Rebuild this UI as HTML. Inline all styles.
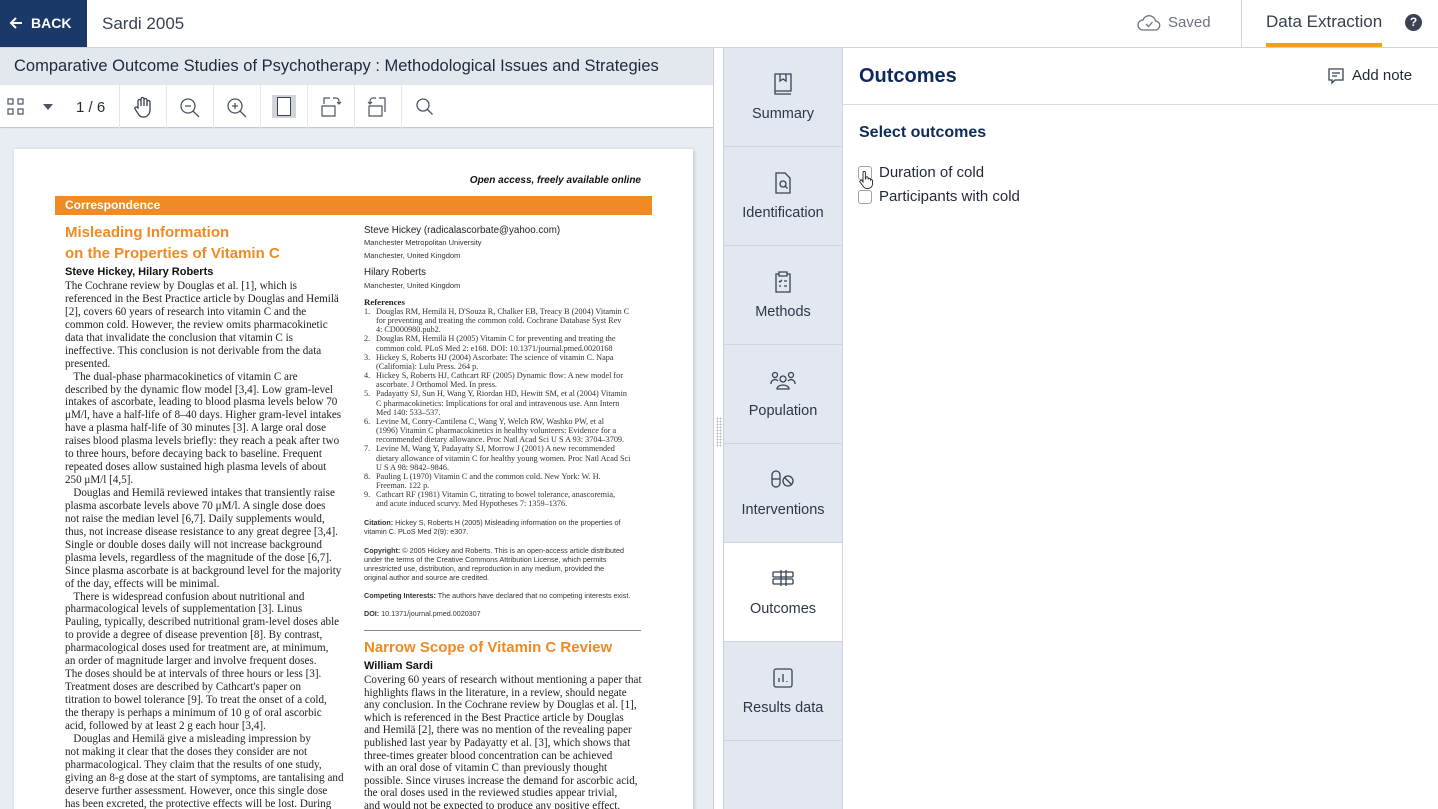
<!DOCTYPE html>
<html style="width:1438px;height:809px;overflow:hidden"><head><meta charset="utf-8">
<style>
*{margin:0;padding:0;box-sizing:border-box}
body{width:1438px;height:809px;overflow:hidden;position:relative;font-family:"Liberation Sans",sans-serif;background:#fff;color:#1f2937}
.a{position:absolute;white-space:nowrap}
.nav{position:absolute;left:724px;width:118px;height:99px;background:#e3e8f0;border-bottom:1px solid #cdd5e0;text-align:center;color:#2d3748;font-size:14.5px}
.nav svg{position:absolute;left:48px;top:24px}
.nav span{position:absolute;left:0;right:0;top:58px}
.l{position:absolute;left:65px;font-family:"Liberation Serif",serif;font-size:11.1px;color:#222;white-space:nowrap;line-height:12.93px}
.r{position:absolute;left:364px;font-family:"Liberation Serif",serif;font-size:11.1px;color:#222;white-space:nowrap;line-height:13px}
.ref{position:absolute;font-family:"Liberation Serif",serif;font-size:8.2px;color:#333;white-space:nowrap;line-height:9.15px}
.sm{position:absolute;left:364px;font-size:7.2px;color:#333;white-space:nowrap;line-height:9px}
.tb{position:absolute;top:85px;height:43px;border-right:1px solid #e5e7eb}
</style></head><body>
<!-- header -->
<div class="a" style="left:0;top:0;width:1438px;height:48px;border-bottom:1px solid #d1d5db;background:#fff"></div>
<div class="a" style="left:0;top:0;width:87px;height:47px;background:#1b3968"></div>
<svg class="a" style="left:9px;top:16px" width="14" height="14" viewBox="0 0 14 14"><path d="M13 7H2M7 2L2 7l5 5" stroke="#fff" stroke-width="2" fill="none"/></svg>
<div class="a" style="left:31px;top:15px;color:#fff;font-weight:bold;font-size:14px">BACK</div>
<div class="a" style="left:102px;top:14px;font-size:17px;color:#374151">Sardi 2005</div>
<svg class="a" style="left:1137px;top:14px" width="24" height="18" viewBox="0 0 24 18"><path d="M6 16h12a4.5 4.5 0 0 0 .5-9A6.5 6.5 0 0 0 6 6a5 5 0 0 0 0 10z" stroke="#6b7280" stroke-width="1.3" fill="none"/><path d="M9 10l2.5 2.5L15.5 8" stroke="#6b7280" stroke-width="1.3" fill="none"/></svg>
<div class="a" style="left:1168px;top:14px;font-size:15px;color:#6b7280">Saved</div>
<div class="a" style="left:1241px;top:0;width:1px;height:47px;background:#d1d5db"></div>
<div class="a" style="left:1266px;top:12px;font-size:17px;color:#374151">Data Extraction</div>
<div class="a" style="left:1266px;top:43px;width:116px;height:4px;background:#f0a01a"></div>
<div class="a" style="left:1405px;top:14px;width:17px;height:17px;border-radius:50%;background:#3b4252;color:#fff;font-size:12px;font-weight:bold;text-align:center;line-height:17px">?</div>

<!-- left pane -->
<div class="a" style="left:0;top:48px;width:713px;height:37px;background:#e3e8ef"></div>
<div class="a" style="left:14px;top:57px;font-size:16.5px;color:#1f2937">Comparative Outcome Studies of Psychotherapy : Methodological Issues and Strategies</div>
<div class="a" style="left:0;top:85px;width:713px;height:43px;background:#fff;border-bottom:1px solid #c4c9d1;box-shadow:0 1px 2px rgba(0,0,0,.15)"></div>
<div class="tb" style="left:0;width:120px"></div>
<div class="tb" style="left:120px;width:47px"></div>
<div class="tb" style="left:167px;width:47px"></div>
<div class="tb" style="left:214px;width:47px"></div>
<div class="tb" style="left:261px;width:47px"></div>
<div class="tb" style="left:308px;width:47px"></div>
<div class="tb" style="left:355px;width:47px"></div>
<svg class="a" style="left:7px;top:98px" width="18" height="18" viewBox="0 0 18 18" fill="none" stroke="#4b5563" stroke-width="1.2"><rect x="1" y="1" width="5" height="5"/><rect x="11" y="1" width="5" height="5"/><rect x="1" y="11" width="5" height="5"/><rect x="11" y="11" width="5" height="5"/></svg>
<svg class="a" style="left:43px;top:104px" width="10" height="6"><path d="M0 0h10L5 6z" fill="#4b5563"/></svg>
<div class="a" style="left:76px;top:99px;font-size:15px;color:#1f2937">1 / 6</div>
<svg class="a" style="left:131px;top:95px" width="24" height="24" viewBox="0 0 24 24" fill="none" stroke="#374151" stroke-width="1.3"><path d="M7 13V6a1.5 1.5 0 0 1 3 0v5V4a1.5 1.5 0 0 1 3 0v7V5a1.5 1.5 0 0 1 3 0v6V7a1.5 1.5 0 0 1 3 0v8c0 4-3 7-6 7h-1c-3 0-4-2-6-5l-2-3a1.4 1.4 0 0 1 2.4-1.4z"/></svg>
<svg class="a" style="left:178px;top:96px" width="24" height="24" viewBox="0 0 24 24" fill="none" stroke="#4b5563" stroke-width="1.3"><circle cx="10" cy="10" r="7"/><path d="M15 15l6 6M7 10h6"/></svg>
<svg class="a" style="left:225px;top:96px" width="24" height="24" viewBox="0 0 24 24" fill="none" stroke="#4b5563" stroke-width="1.3"><circle cx="10" cy="10" r="7"/><path d="M15 15l6 6M7 10h6M10 7v6"/></svg>
<div class="a" style="left:272px;top:95px;width:24px;height:23px;background:#d1d5db"></div>
<div class="a" style="left:277px;top:97px;width:14px;height:19px;border:1.5px solid #374151;background:#fff"></div>
<svg class="a" style="left:319px;top:95px" width="24" height="24" viewBox="0 0 24 24" fill="none" stroke="#4b5563" stroke-width="1.2"><path d="M3 11h13v10H3z"/><path d="M5 9V3h6M14 3h3a3 3 0 0 1 3 3v3M18 7l2 2 2-2"/></svg>
<svg class="a" style="left:366px;top:95px" width="24" height="24" viewBox="0 0 24 24" fill="none" stroke="#4b5563" stroke-width="1.2"><path d="M3 11h13v10H3z"/><path d="M13 3h6v14M10 3H7a3 3 0 0 0-3 3v3M2 7l2 2 2-2"/></svg>
<svg class="a" style="left:415px;top:97px" width="20" height="20" viewBox="0 0 20 20" fill="none" stroke="#4b5563" stroke-width="1.3"><circle cx="8" cy="8" r="6"/><path d="M12.5 12.5l5 5"/></svg>

<div class="a" style="left:0;top:129px;width:713px;height:680px;background:#e8edf4;overflow:hidden">
<div class="a" style="left:14px;top:20px;width:679px;height:700px;background:#fff;box-shadow:1px 1px 4px rgba(0,0,0,.2)"></div>
</div>
<!-- splitter -->
<div class="a" style="left:713px;top:48px;width:11px;height:761px;background:#fff;border-left:1px solid #c9d0da;border-right:1px solid #c9d0da"></div>
<div class="a" style="left:716px;top:417px;width:6px;height:30px;background-image:radial-gradient(#bbb 0.8px,transparent 1px);background-size:3px 3px"></div>

<!-- paper -->
<div class="a" style="left:300px;top:175px;width:341px;text-align:right;font-size:10px;font-weight:bold;font-style:italic;color:#111">Open access, freely available online</div>
<div class="a" style="left:55px;top:196px;width:597px;height:19px;background:#f08a24"></div>
<div class="a" style="left:65px;top:198px;color:#fff;font-weight:bold;font-size:12px">Correspondence</div>
<div class="a" style="left:65px;top:224px;color:#f08a24;font-weight:bold;font-size:15px">Misleading Information</div>
<div class="a" style="left:65px;top:245px;color:#f08a24;font-weight:bold;font-size:15px">on the Properties of Vitamin C</div>
<div class="a" style="left:65px;top:266px;color:#111;font-weight:bold;font-size:11px">Steve Hickey, Hilary Roberts</div>
<div class="l" style="top:280px">The Cochrane review by Douglas et al. [1], which is<br>referenced in the Best Practice article by Douglas and Hemilä<br>[2], covers 60 years of research into vitamin C and the<br>common cold. However, the review omits pharmacokinetic<br>data that invalidate the conclusion that vitamin C is<br>ineffective. This conclusion is not derivable from the data<br>presented.<br>&nbsp;&nbsp;&nbsp;The dual-phase pharmacokinetics of vitamin C are<br>described by the dynamic flow model [3,4]. Low gram-level<br>intakes of ascorbate, leading to blood plasma levels below 70<br>μM/l, have a half-life of 8–40 days. Higher gram-level intakes<br>have a plasma half-life of 30 minutes [3]. A large oral dose<br>raises blood plasma levels briefly: they reach a peak after two<br>to three hours, before decaying back to baseline. Frequent<br>repeated doses allow sustained high plasma levels of about<br>250 μM/l [4,5].<br>&nbsp;&nbsp;&nbsp;Douglas and Hemilä reviewed intakes that transiently raise<br>plasma ascorbate levels above 70 μM/l. A single dose does<br>not raise the median level [6,7]. Daily supplements would,<br>thus, not increase disease resistance to any great degree [3,4].<br>Single or double doses daily will not increase background<br>plasma levels, regardless of the magnitude of the dose [6,7].<br>Since plasma ascorbate is at background level for the majority<br>of the day, effects will be minimal.<br>&nbsp;&nbsp;&nbsp;There is widespread confusion about nutritional and<br>pharmacological levels of supplementation [3]. Linus<br>Pauling, typically, described nutritional gram-level doses able<br>to provide a degree of disease prevention [8]. By contrast,<br>pharmacological doses used for treatment are, at minimum,<br>an order of magnitude larger and involve frequent doses.<br>The doses should be at intervals of three hours or less [3].<br>Treatment doses are described by Cathcart's paper on<br>titration to bowel tolerance [9]. To treat the onset of a cold,<br>the therapy is perhaps a minimum of 10 g of oral ascorbic<br>acid, followed by at least 2 g each hour [3,4].<br>&nbsp;&nbsp;&nbsp;Douglas and Hemilä give a misleading impression by<br>not making it clear that the doses they consider are not<br>pharmacological. They claim that the results of one study,<br>giving an 8-g dose at the start of symptoms, are tantalising and<br>deserve further assessment. However, once this single dose<br>has been excreted, the protective effects will be lost. During</div>

<div class="a" style="left:364px;top:225px;font-size:9.8px;color:#222">Steve Hickey (radicalascorbate@yahoo.com)</div>
<div class="a" style="left:364px;top:238px;font-size:7.5px;color:#333">Manchester Metropolitan University</div>
<div class="a" style="left:364px;top:251px;font-size:7.5px;color:#333">Manchester, United Kingdom</div>
<div class="a" style="left:364px;top:267px;font-size:9.8px;color:#222">Hilary Roberts</div>
<div class="a" style="left:364px;top:281px;font-size:7.5px;color:#333">Manchester, United Kingdom</div>
<div class="a" style="left:364px;top:297px;font-size:8.8px;font-weight:bold;font-family:'Liberation Serif',serif;color:#222">References</div>
<div class="ref" style="left:364px;top:307px">1.<br><br><br>2.<br><br>3.<br><br>4.<br><br>5.<br><br><br>6.<br><br><br>7.<br><br><br>8.<br><br>9.</div>
<div class="ref" style="left:376px;top:307px">Douglas RM, Hemilä H, D'Souza R, Chalker EB, Treacy B (2004) Vitamin C<br>for preventing and treating the common cold. Cochrane Database Syst Rev<br>4: CD000980.pub2.<br>Douglas RM, Hemilä H (2005) Vitamin C for preventing and treating the<br>common cold. PLoS Med 2: e168. DOI: 10.1371/journal.pmed.0020168<br>Hickey S, Roberts HJ (2004) Ascorbate: The science of vitamin C. Napa<br>(California): Lulu Press. 264 p.<br>Hickey S, Roberts HJ, Cathcart RF (2005) Dynamic flow: A new model for<br>ascorbate. J Orthomol Med. In press.<br>Padayatty SJ, Sun H, Wang Y, Riordan HD, Hewitt SM, et al (2004) Vitamin<br>C pharmacokinetics: Implications for oral and intravenous use. Ann Intern<br>Med 140: 533–537.<br>Levine M, Conry-Cantilena C, Wang Y, Welch RW, Washko PW, et al<br>(1996) Vitamin C pharmacokinetics in healthy volunteers: Evidence for a<br>recommended dietary allowance. Proc Natl Acad Sci U S A 93: 3704–3709.<br>Levine M, Wang Y, Padayatty SJ, Morrow J (2001) A new recommended<br>dietary allowance of vitamin C for healthy young women. Proc Natl Acad Sci<br>U S A 98: 9842–9846.<br>Pauling L (1970) Vitamin C and the common cold. New York: W. H.<br>Freeman. 122 p.<br>Cathcart RF (1981) Vitamin C, titrating to bowel tolerance, anascoremia,<br>and acute induced scurvy. Med Hypotheses 7: 1359–1376.</div>
<div class="sm" style="top:518px"><b>Citation:</b> Hickey S, Roberts H (2005) Misleading information on the properties of<br>vitamin C. PLoS Med 2(9): e307.</div>
<div class="sm" style="top:546px"><b>Copyright:</b> © 2005 Hickey and Roberts. This is an open-access article distributed<br>under the terms of the Creative Commons Attribution License, which permits<br>unrestricted use, distribution, and reproduction in any medium, provided the<br>original author and source are credited.</div>
<div class="sm" style="top:591px"><b>Competing Interests:</b> The authors have declared that no competing interests exist.</div>
<div class="sm" style="top:609px"><b>DOI:</b> 10.1371/journal.pmed.0020307</div>
<div class="a" style="left:364px;top:630px;width:277px;height:1px;background:#888"></div>
<div class="a" style="left:364px;top:639px;color:#f08a24;font-weight:bold;font-size:15px">Narrow Scope of Vitamin C Review</div>
<div class="a" style="left:364px;top:660px;color:#111;font-weight:bold;font-size:11px">William Sardi</div>
<div class="r" style="top:674px;line-height:12.6px">Covering 60 years of research without mentioning a paper that<br>highlights flaws in the literature, in a review, should negate<br>any conclusion. In the Cochrane review by Douglas et al. [1],<br>which is referenced in the Best Practice article by Douglas<br>and Hemilä [2], there was no mention of the revealing paper<br>published last year by Padayatty et al. [3], which shows that<br>three-times greater blood concentration can be achieved<br>with an oral dose of vitamin C than previously thought<br>possible. Since viruses increase the demand for ascorbic acid,<br>the oral doses used in the reviewed studies appear trivial,<br>and would not be expected to produce any positive effect.</div>

<!-- nav -->
<div class="a" style="left:724px;top:48px;width:119px;height:761px;background:#e3e8f0;border-right:1px solid #cdd5e0"></div>
<div class="nav" style="top:48px"><svg width="22" height="24" viewBox="0 0 22 24" fill="none" stroke="#374151" stroke-width="1.3"><path d="M3 2h16v17H3zM3 19v3h16M8 2v7l3-2 3 2V2"/></svg><span>Summary</span></div>
<div class="nav" style="top:147px"><svg width="22" height="24" viewBox="0 0 22 24" fill="none" stroke="#374151" stroke-width="1.3"><path d="M4 2h9l5 5v15H4z"/><circle cx="11" cy="13" r="3"/><path d="M13 15l2.5 2.5"/></svg><span>Identification</span></div>
<div class="nav" style="top:246px"><svg width="22" height="24" viewBox="0 0 22 24" fill="none" stroke="#374151" stroke-width="1.3"><path d="M7 4H4v18h14V4h-3M7 2h8v4H7zM7 11l1 1 2-2M12 11h3M7 16h2M12 16h3"/></svg><span>Methods</span></div>
<div class="nav" style="top:345px"><svg width="26" height="24" viewBox="0 0 26 24" fill="none" stroke="#374151" stroke-width="1.3" style="left:46px"><circle cx="5" cy="6" r="2.5"/><circle cx="21" cy="6" r="2.5"/><circle cx="13" cy="10" r="3"/><path d="M1 15a4 4 0 0 1 7-3M25 15a4 4 0 0 0-7-3M7 20a6 4 0 0 1 12 0z"/></svg><span>Population</span></div>
<div class="nav" style="top:444px"><svg width="26" height="24" viewBox="0 0 26 24" fill="none" stroke="#374151" stroke-width="1.3" style="left:46px"><rect x="2" y="3" width="8" height="16" rx="4"/><path d="M2 11h8"/><circle cx="18" cy="13" r="5"/><path d="M14.5 9.5l7 7"/></svg><span>Interventions</span></div>
<div class="nav" style="top:543px;background:#fff"><svg width="22" height="24" viewBox="0 0 22 24" fill="none" stroke="#374151" stroke-width="1.3"><rect x="1" y="5" width="20" height="5" rx="1"/><rect x="1" y="12" width="20" height="5" rx="1"/><path d="M9 3v16M14 3v16"/></svg><span>Outcomes</span></div>
<div class="nav" style="top:642px"><svg width="22" height="24" viewBox="0 0 22 24" fill="none" stroke="#374151" stroke-width="1.3"><rect x="2" y="3" width="18" height="18" rx="2"/><path d="M7 16v-4M11 16V8M15 16v-1"/></svg><span>Results data</span></div>

<!-- right panel -->
<div class="a" style="left:843px;top:104px;width:595px;height:1px;background:#d5dbe4"></div>
<div class="a" style="left:859px;top:65px;font-size:20px;font-weight:bold;color:#0f2a5a">Outcomes</div>
<svg class="a" style="left:1327px;top:67px" width="18" height="18" viewBox="0 0 18 18" fill="none" stroke="#374151" stroke-width="1.3"><path d="M2 2h14v11H8l-3 3v-3H2z"/><path d="M5 6h8M5 9h5"/></svg>
<div class="a" style="left:1352px;top:67px;font-size:15px;color:#1f2937">Add note</div>
<div class="a" style="left:859px;top:124px;font-size:16px;font-weight:bold;color:#0f2a5a">Select outcomes</div>
<div class="a" style="left:858px;top:166px;width:14px;height:14px;border:1px solid #9ca3af;border-radius:3px;background:#fff"></div>
<div class="a" style="left:879px;top:164px;font-size:15px;color:#1f2937">Duration of cold</div>
<div class="a" style="left:858px;top:190px;width:14px;height:14px;border:1px solid #9ca3af;border-radius:3px;background:#fff"></div>
<div class="a" style="left:879px;top:188px;font-size:15px;color:#1f2937">Participants with cold</div>
<svg class="a" style="left:859px;top:171px" width="14" height="18" viewBox="0 0 14 18"><path d="M4 1.5a1.2 1.2 0 0 1 2.4 0V8h.3V7a1.2 1.2 0 0 1 2.4 0v1.5a1.2 1.2 0 0 1 2.4 0V9a1.1 1.1 0 0 1 2 .5V13c0 2.5-2 4.5-4.5 4.5H8C6 17.5 5 16.5 4 15L1 11a1.2 1.2 0 0 1 2-1.3l1 1.3z" fill="#fff" stroke="#222" stroke-width="0.9"/></svg>
</body></html>
